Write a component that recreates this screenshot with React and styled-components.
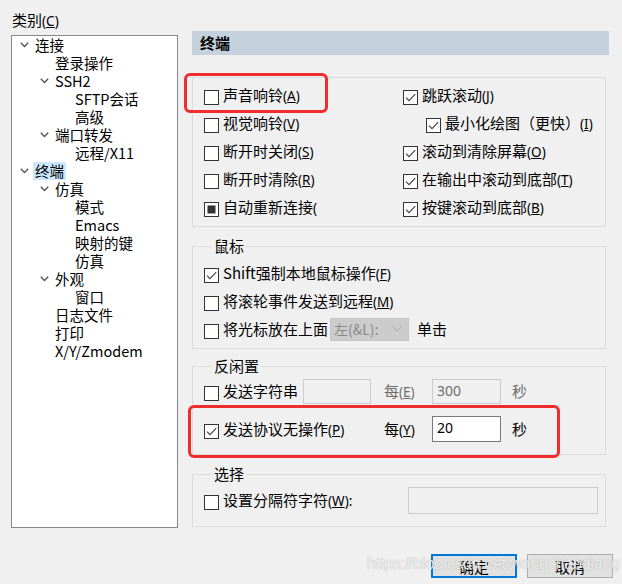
import React from 'react';
import styled, { createGlobalStyle } from 'styled-components';

const Global = createGlobalStyle`
  html, body { margin: 0; padding: 0; background: #f0f0f0; }
  body {
    font-family: "Noto Sans CJK SC", "Noto Sans", sans-serif;
    font-size: 15px;
    color: #000;
  }
`;

const Root = styled.div`
  position: relative;
  width: 622px;
  height: 584px;
  box-sizing: border-box;
  padding: 10px 0 0 11px;
  display: grid;
  grid-template-columns: 167px 421px;
  column-gap: 14px;
  align-content: start;
  background: #f0f0f0;
  overflow: hidden;
`;

const LeftCol = styled.div`
  display: flex;
  flex-direction: column;
`;

const CatLabel = styled.div`
  height: 20px;
  line-height: 20px;
  padding-left: 1px;
  font-size: 15px;
`;

const Tree = styled.div`
  margin-top: 5px;
  height: 493px;
  box-sizing: border-box;
  border: 1px solid #828790;
  background: #fff;
  padding-top: 0;
`;

const TreeRow = styled.div`
  height: 18px;
  display: flex;
  align-items: center;
  padding-left: ${p => 4 + p.$level * 20}px;
  font-size: 14.5px;
  line-height: 18px;
  white-space: nowrap;
`;

const Slot = styled.span`
  width: 17px;
  height: 18px;
  display: flex;
  align-items: center;
  justify-content: center;
  flex: none;
`;

const TreeText = styled.span`
  padding: 0 2px;
  line-height: 18px;
  background: ${p => (p.$selected ? '#cce8ff' : 'transparent')};
`;

const RightCol = styled.div`
  padding-top: 21px;
  display: flex;
  flex-direction: column;
`;

const Header = styled.div`
  width: 417px;
  height: 24px;
  box-sizing: border-box;
  background: #c5d2de;
  padding-left: 8px;
  line-height: 24px;
  font-weight: bold;
  font-size: 15px;
`;

const PlainGroup = styled.div`
  width: 414px;
  box-sizing: border-box;
  margin-top: 22px;
  border: 1px solid #dcdcdc;
  padding: 3px 0 5px 11px;
  display: grid;
  grid-template-columns: 199px 1fr;
  grid-auto-rows: 28px;
`;

const Group = styled.fieldset`
  width: 414px;
  box-sizing: border-box;
  min-width: 0;
  margin: ${p => p.$top}px 0 0 0;
  border: 1px solid #dcdcdc;
  padding: ${p => p.$pt}px 0 ${p => p.$pb}px 11px;
`;

const Legend = styled.legend`
  margin-left: 8px;
  padding: 0 2px;
  font-size: 15px;
  line-height: 20px;
  height: 20px;
`;

const Row = styled.div`
  height: 28px;
  display: flex;
  align-items: center;
  padding-left: ${p => p.$indent || 0}px;
  white-space: nowrap;
`;

const BoxWrap = styled.span`
  width: 15px;
  height: 15px;
  flex: none;
  display: block;
  margin-right: 4px;
`;

const Label = styled.span`
  font-size: 15px;
  line-height: 20px;
  color: ${p => (p.$disabled ? '#6d6d6d' : '#000')};
`;

const Acc = styled.span`
  font-size: 13.5px;
  font-family: "Noto Sans", "Noto Sans CJK SC", sans-serif;
`;

const IdleGrid = styled.div`
  display: grid;
  grid-template-columns: 99px 81px 48px 80px auto;
  grid-template-rows: 28px 28px;
  row-gap: 10px;
  align-items: center;
`;

const Span2 = styled.div`
  grid-column: 1 / span 2;
`;

const Field = styled.div`
  width: ${p => p.$w}px;
  height: ${p => p.$h || 25}px;
  box-sizing: border-box;
  border: 1px solid ${p => (p.$active ? '#7a7a7a' : '#cccccc')};
  background: ${p => (p.$active ? '#fff' : '#f0f0f0')};
  color: ${p => (p.$active ? '#000' : '#6d6d6d')};
  font-family: "Noto Sans", sans-serif;
  font-size: 14px;
  line-height: 18px;
  padding: 2px 4px;
  margin-left: ${p => p.$ml || 0}px;
  margin-right: ${p => p.$mr || 0}px;
`;

const Combo = styled.div`
  width: 79px;
  height: 23px;
  box-sizing: border-box;
  margin-left: 2px;
  background: #cccccc;
  border: 1px solid #c4c4c4;
  display: flex;
  align-items: center;
  justify-content: space-between;
  padding: 0 6px 0 3px;
  color: #8a8a8a;
  font-size: 14px;
`;

const SelRow = styled(Row)`
  justify-content: space-between;
`;

const Footer = styled.div`
  grid-column: 1 / -1;
  margin-top: 26px;
  display: flex;
  justify-content: flex-end;
  gap: 10px;
`;

const Button = styled.div`
  width: 86px;
  height: 24px;
  box-sizing: border-box;
  background: #e1e1e1;
  border: ${p => (p.$primary ? '2px solid #0078d7' : '1px solid #adadad')};
  display: flex;
  align-items: center;
  justify-content: center;
  font-size: 15px;
`;

const Highlight = styled.div`
  position: absolute;
  left: ${p => p.$x}px;
  top: ${p => p.$y}px;
  width: ${p => p.$w}px;
  height: ${p => p.$h}px;
  box-sizing: border-box;
  border: 3px solid #ee2d2d;
  border-radius: 6px;
  pointer-events: none;
`;

const Watermark = styled.div`
  position: absolute;
  left: 367px;
  top: 555px;
  font-family: "Liberation Sans", Arial, sans-serif;
  font-size: 16px;
  letter-spacing: -0.2px;
  color: rgba(255, 255, 255, 0.82);
  text-shadow: 0 0 1px rgba(90, 90, 90, 0.55);
  white-space: nowrap;
  pointer-events: none;
`;

const Chevron = () => (
  <svg width="9" height="6" viewBox="0 0 9 6">
    <path d="M0.8 0.8 L4.5 4.5 L8.2 0.8" fill="none" stroke="#505050" strokeWidth="1.3" />
  </svg>
);

const Box = ({ state }) => (
  <BoxWrap>
    <svg width="15" height="15" viewBox="0 0 15 15">
      <rect x="0.5" y="0.5" width="14" height="14" fill="#fff" stroke="#333" />
      {state === 'checked' && (
        <path d="M3 7.6 L6 10.6 L12.2 4.2" fill="none" stroke="#444" strokeWidth="1.2" />
      )}
      {state === 'mixed' && <rect x="3.5" y="3.5" width="8" height="8" fill="#333" />}
    </svg>
  </BoxWrap>
);

const Text = ({ t, acc, tail, disabled }) => (
  <Label $disabled={disabled}>
    {t}
    {acc && (
      <Acc>
        (<u>{acc}</u>){tail || ''}
      </Acc>
    )}
  </Label>
);

const Check = ({ state, t, acc, tail, indent }) => (
  <Row $indent={indent}>
    <Box state={state} />
    <Text t={t} acc={acc} tail={tail} />
  </Row>
);

const treeItems = [
  [0, true, '连接'],
  [1, false, '登录操作'],
  [1, true, 'SSH2'],
  [2, false, 'SFTP会话'],
  [2, false, '高级'],
  [1, true, '端口转发'],
  [2, false, '远程/X11'],
  [0, true, '终端', true],
  [1, true, '仿真'],
  [2, false, '模式'],
  [2, false, 'Emacs'],
  [2, false, '映射的键'],
  [2, false, '仿真'],
  [1, true, '外观'],
  [2, false, '窗口'],
  [1, false, '日志文件'],
  [1, false, '打印'],
  [1, false, 'X/Y/Zmodem'],
];

export default function App() {
  return (
    <>
      <Global />
      <Root>
        <LeftCol>
          <CatLabel>
            类别<Acc>(<u>C</u>)</Acc>
          </CatLabel>
          <Tree>
            {treeItems.map(([level, exp, label, sel], i) => (
              <TreeRow key={i} $level={level}>
                <Slot>{exp && <Chevron />}</Slot>
                <TreeText $selected={sel}>{label}</TreeText>
              </TreeRow>
            ))}
          </Tree>
        </LeftCol>

        <RightCol>
          <Header>终端</Header>

          <PlainGroup>
            <Check state="unchecked" t="声音响铃" acc="A" />
            <Check state="checked" t="跳跃滚动" acc="J" />
            <Check state="unchecked" t="视觉响铃" acc="V" />
            <Check state="checked" t="最小化绘图（更快）" acc="I" indent={23} />
            <Check state="unchecked" t="断开时关闭" acc="S" />
            <Check state="checked" t="滚动到清除屏幕" acc="O" />
            <Check state="unchecked" t="断开时清除" acc="R" />
            <Check state="checked" t="在输出中滚动到底部" acc="T" />
            <Row>
              <Box state="mixed" />
              <Label>自动重新连接<Acc>(</Acc></Label>
            </Row>
            <Check state="checked" t="按键滚动到底部" acc="B" />
          </PlainGroup>

          <Group $top={9} $pt={3} $pb={5}>
            <Legend>鼠标</Legend>
            <Check state="checked" t="Shift强制本地鼠标操作" acc="F" />
            <Check state="unchecked" t="将滚轮事件发送到远程" acc="M" />
            <Row>
              <Box state="unchecked" />
              <Label>将光标放在上面</Label>
              <Combo>
                <span>左(&amp;L):</span>
                <svg width="10" height="6" viewBox="0 0 10 6">
                  <path d="M0.5 0.5 L5 5 L9.5 0.5" fill="none" stroke="#a8a8a8" strokeWidth="1" />
                </svg>
              </Combo>
              <Label style={{ marginLeft: 8 }}>单击</Label>
            </Row>
          </Group>

          <Group $top={7} $pt={1} $pb={11}>
            <Legend>反闲置</Legend>
            <IdleGrid>
              <Row>
                <Box state="unchecked" />
                <Label>发送字符串</Label>
              </Row>
              <Field $w={68} />
              <Text t="每" acc="E" disabled />
              <Field $w={69}>300</Field>
              <Label $disabled>秒</Label>

              <Span2>
                <Check state="checked" t="发送协议无操作" acc="P" />
              </Span2>
              <Text t="每" acc="Y" />
              <Field $w={69} $h={26} $active>20</Field>
              <Label>秒</Label>
            </IdleGrid>
          </Group>

          <Group $top={9} $pt={2} $pb={12}>
            <Legend>选择</Legend>
            <SelRow>
              <Row>
                <Box state="unchecked" />
                <Text t="设置分隔符字符" acc="W" tail=":" />
              </Row>
              <Field $w={190} $h={27} $mr={7} />
            </SelRow>
          </Group>
        </RightCol>

        <Footer>
          <Button $primary>确定</Button>
          <Button>取消</Button>
        </Footer>

        <Highlight $x={184} $y={73} $w={144} $h={40} />
        <Highlight $x={188} $y={405} $w={372} $h={53} />
        <Watermark>https://blog.csdn.net/wangchaoqiang</Watermark>
      </Root>
    </>
  );
}
